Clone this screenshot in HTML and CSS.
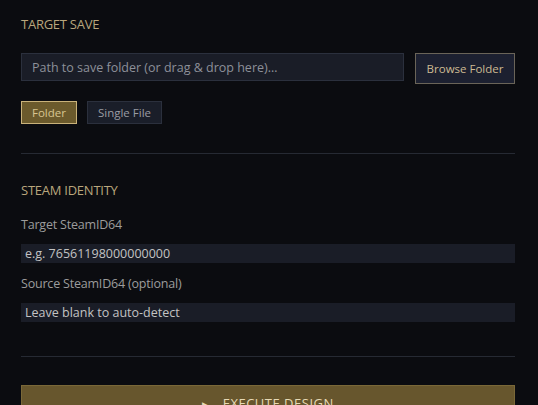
FILE: index.html
```html
<!DOCTYPE html>
<html>
<head>
<meta charset="utf-8">
<link rel="stylesheet" href="styles.css">
</head>
<body>
<div class="panel">
  <h2 class="section-title title-first">TARGET SAVE</h2>
  <div class="path-row">
    <input class="path-input" type="text" placeholder="Path to save folder (or drag &amp; drop here)…">
    <button class="browse-btn">Browse Folder</button>
  </div>
  <div class="mode-row">
    <button class="mode-btn active">Folder</button>
    <button class="mode-btn">Single File</button>
  </div>
  <hr class="divider div-1">
  <h2 class="section-title">STEAM IDENTITY</h2>
  <label class="field-label">Target SteamID64</label>
  <input class="id-input" type="text" placeholder="e.g. 76561198000000000">
  <label class="field-label label-2">Source SteamID64 (optional)</label>
  <input class="id-input" type="text" placeholder="Leave blank to auto-detect">
  <hr class="divider div-2">
  <button class="execute-btn"><span class="play">▶</span>EXECUTE DESIGN</button>
</div>
</body>
</html>
```
FILE: styles.css
```css
html, body {
  margin: 0;
  padding: 0;
  background: #0b0c10;
  overflow: hidden;
}
body {
  font-family: "Open Sans", "Noto Sans", sans-serif;
  font-size: 12.5px;
}
.panel {
  padding: 16px 23px 0 21px;
  display: flex;
  flex-direction: column;
}
.section-title {
  margin: 0;
  font-size: 13px;
  line-height: 16px;
  font-weight: 400;
  color: #b9a67c;
  letter-spacing: -0.25px;
}
.path-row {
  display: flex;
  align-items: flex-start;
  gap: 11px;
  margin-top: 21px;
}
.path-input {
  flex: 1;
  height: 28px;
  box-sizing: border-box;
  background: #1a1d27;
  border: 1px solid #2b303d;
  color: #c9c9c9;
  padding: 0 10px;
  font: 12.5px "Open Sans", sans-serif;
  outline: none;
}
.path-input::placeholder { color: #8d9099; }
.browse-btn {
  width: 100px;
  height: 31px;
  box-sizing: border-box;
  background: #1c2030;
  border: 1px solid #6a6458;
  color: #cdbb93;
  font: 11.5px "Open Sans", sans-serif;
  padding: 0;
}
.mode-row {
  display: flex;
  gap: 10px;
  margin-top: 17px;
}
.mode-btn {
  height: 23px;
  box-sizing: border-box;
  padding: 0 10px;
  background: #1a1e29;
  border: 1px solid #2b303d;
  color: #9a9ca3;
  font: 11.5px "Open Sans", sans-serif;
}
.mode-btn.active {
  background: #6b5a2c;
  border-color: #c9b27a;
  color: #d8c590;
}
.divider {
  border: 0;
  height: 1px;
  background: #262a33;
  margin: 29px 0 28px;
}
.div-2 { margin: 34px 0 28px; }
.field-label {
  display: block;
  margin-top: 19px;
  font-size: 12.5px;
  line-height: 16px;
  color: #9c9c9c;
  letter-spacing: -0.2px;
}
.label-2 { margin-top: 13px; }
.id-input {
  margin-top: 11px;
  height: 19px;
  box-sizing: border-box;
  background: #1a1d27;
  border: 0;
  padding: 0 4px;
  font: 12.5px "Open Sans", sans-serif;
  color: #c9c9c9;
  outline: none;
}
.id-input::placeholder { color: #c3c3c3; }
.execute-btn {
  box-sizing: border-box;
  height: 40px;
  background: #67562d;
  border: 1px solid #7a6838;
  color: #e6d9b4;
  font: 13px "Open Sans", sans-serif;
  line-height: 16px;
  letter-spacing: 0.5px;
  padding: 9px 0 13px;
}
.play {
  font-size: 9px;
  margin-right: 13px;
  color: #e6d9b4;
}
```
